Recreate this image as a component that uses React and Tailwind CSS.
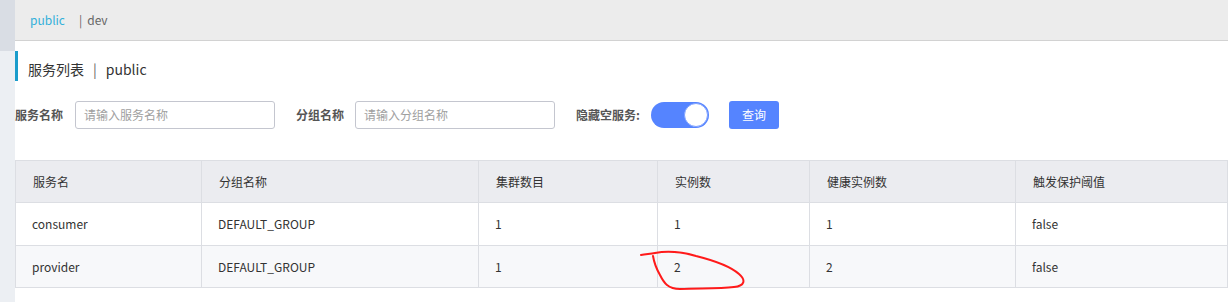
import React from "react";

const font = { fontFamily: '"Noto Sans CJK SC", "Noto Sans", sans-serif' };

const cols = ["服务名", "分组名称", "集群数目", "实例数", "健康实例数", "触发保护阈值"];
const rows = [
  ["consumer", "DEFAULT_GROUP", "1", "1", "1", "false"],
  ["provider", "DEFAULT_GROUP", "1", "2", "2", "false"],
];

export default function App() {
  return (
    <div className="flex w-[1228px] h-[302px] overflow-hidden bg-white text-[#333]" style={font}>
      <div className="w-[15px] flex flex-col shrink-0">
        <div className="h-[51px] bg-[#d9dde4]" />
        <div className="flex-1 bg-[#eceff3]" />
      </div>
      <div className="flex-1 flex flex-col relative">
        <div className="h-[41px] bg-[#ececec] border-b border-[#d2d2d2] flex items-center pl-[15px] text-[12px]">
          <span className="text-[#33b0da]">public</span>
          <span className="ml-[14px] text-[#666]">|</span>
          <span className="ml-[5px] text-[#666]">dev</span>
        </div>
        <div className="mt-[10px] h-[30px] flex items-center border-l-[3px] border-[#1a9ccb] pl-[10px] pt-[7px] text-[14px] text-[#333]">
          服务列表
          <span className="mx-[9px] text-[#666]">|</span>
          public
        </div>
        <div className="mt-[20px] h-[28px] flex items-center text-[12px]">
          <span className="font-bold text-[#555] w-[60px]">服务名称</span>
          <div className="w-[200px] h-[28px] border border-[#c4c6cf] rounded-[3px] flex items-center px-[8px] text-[#a0a0a0]">请输入服务名称</div>
          <span className="ml-[21px] font-bold text-[#555] w-[59px]">分组名称</span>
          <div className="w-[200px] h-[28px] border border-[#c4c6cf] rounded-[3px] flex items-center px-[8px] text-[#a0a0a0]">请输入分组名称</div>
          <span className="ml-[21px] font-bold text-[#555] w-[75px]">隐藏空服务:</span>
          <div className="w-[58px] h-[26px] rounded-full bg-[#5584ff] flex items-center justify-end pr-[1px]">
            <div className="w-[24px] h-[24px] rounded-full bg-white border border-[#7fa2ff]" />
          </div>
          <div className="ml-[20px] w-[50px] h-[28px] rounded-[3px] bg-[#5584ff] text-white flex items-center justify-center text-[12px]">查询</div>
        </div>
        <div className="mt-[31px] border-t border-l border-[#dcdee3] text-[12px]">
          <div className="grid grid-cols-[186px_277px_179px_152px_206px_1fr] bg-[#ebecf0]">
            {cols.map((c) => (
              <div key={c} className="h-[42px] border-r border-b border-[#dcdee3] flex items-center pl-[17px] text-[#333]">{c}</div>
            ))}
          </div>
          {rows.map((r, i) => (
            <div key={i} className={`grid grid-cols-[186px_277px_179px_152px_206px_1fr] ${i === 1 ? "bg-[#f7f8fa]" : "bg-white"}`}>
              {r.map((c, j) => (
                <div key={j} className={`${i === 0 ? "h-[43px]" : "h-[42px]"} border-r border-b border-[#dcdee3] flex items-center pl-[16px] text-[#333]`}>{c}</div>
              ))}
            </div>
          ))}
        </div>
        <svg className="absolute left-0 top-0 pointer-events-none" width="1213" height="302" viewBox="15 0 1213 302">
          <path
            d="M641 255 C646 254 650 254 655 253 C666 251 682 252 696 256 C712 260 730 266 739 274 C746 280 745 286 734 287 C718 289 698 288 680 289 C668 289 664 283 660 275 C656 268 654 262 653 256"
            fill="none"
            stroke="#ff1a1a"
            strokeWidth="2"
            strokeLinecap="round"
          />
        </svg>
      </div>
    </div>
  );
}
